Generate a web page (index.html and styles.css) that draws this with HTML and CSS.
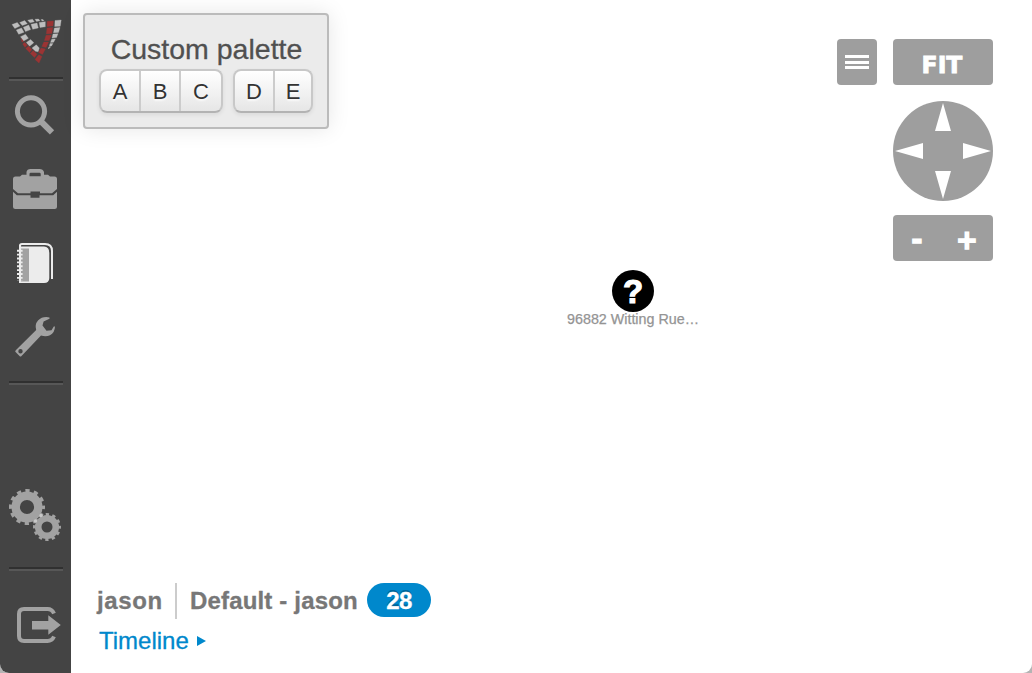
FILE: index.html
```html
<!DOCTYPE html>
<html lang="en">
<head>
<meta charset="utf-8">
<title>Workspace</title>
<link rel="stylesheet" href="styles.css">
</head>
<body>
<div class="app">
  <nav class="sidebar">
    <svg class="logo" viewBox="0 0 71 77" width="71" height="77">
      <g fill="#bdbdbd" stroke="#bdbdbd" stroke-width=".3">
        <path d="M12 24.500L17.300 22.500L20 26L14.800 28.500ZM19.700 22.500L24.700 20.600L27.300 23.700L22.300 25.500ZM27.700 20.200L32.500 19.200L34.300 21.800L30 22.800ZM35 19.300L38.500 19L40 20.800L36.500 21.400ZM41 19.500L43 19.600L44 20.700L42 20.900Z"/>
        <path d="M23.300 27.300L28.700 25L30.700 29.600L25.500 31.600ZM31 24.300L37 23L38.300 27.900L32.700 29.300ZM39.200 22.500L45.300 21.700V26.800L40 27.500ZM16.300 30L21.500 28L24 32.300L18.700 34.300ZM20.500 36.700L25.500 34.200L28.400 38.300L23.600 41ZM26.300 42.500L30.600 39.400L33.800 42.800L29.600 46.200ZM32 48L36.300 44.800L39.300 48L38.200 51.700L35.500 51.300Z"/>
        <path d="M55 20.500L61.200 20L60.300 26.200L54.700 26.500ZM54.400 28L60 27.500L58.500 32.400L53.500 32.700ZM53 34L58 33.700L56.500 37.600L52 38ZM51.700 39.200L55.300 39L53.700 42.200L50.500 42.400ZM50 43.600L53 43.400L51.500 46L49.300 46.500ZM48.500 47.500L50.500 47L48.500 49Z"/>
      </g>
      <path fill="#9b3434" stroke="#9b3434" stroke-width=".3" d="M47.300 21.300L53.400 20.900L53 26L47 26.600ZM47 28L52.700 27.500L51.900 33.500L46.300 33.900ZM46 35.300L51.300 35L49.200 40.600L44.400 40.500ZM43.800 42L48.600 42.100L46.200 47.500L41.800 46.600ZM41 48L45.400 49L42.500 54.400L38.600 52.400ZM38.800 54.800L42 56.500L39 63L35 59.500ZM33.200 50.500L37 54.200L34.500 57.600L30.300 53.500ZM28.500 46L32 49.500L29.600 52.600L25.700 48.400ZM24.500 42.300L27.300 45L25 47.400L22.700 44ZM21 38.500L23.500 41.300L22 42.300Z"/>
    </svg>
    <div class="rule"></div>
    <svg viewBox="0 81 71 69" width="71" height="69">
      <circle cx="31" cy="111.300" r="13.600" fill="none" stroke="#a2a2a2" stroke-width="5"/>
      <path d="M39.500 120L52 132.300" stroke="#a2a2a2" stroke-width="6"/>
    </svg>
    <svg viewBox="0 150 71 76" width="71" height="76">
      <path fill="#a2a2a2" fill-rule="evenodd" d="M13 179Q13 176.500 15.500 176.500H20L22 174.700H26.500V172Q27 169 30.500 169H39.500Q43 169 44 172V174.700H48L50 176.500H54.500Q57 176.500 57 179V189L52 193.200H40V191.500H30.500V193.200H18L13 189ZM29.500 176.300H40.700V174Q40.700 172.800 39.500 172.800H30.700Q29.500 172.800 29.500 174Z"/>
      <path fill="#a2a2a2" d="M13 191.700L16.800 195.300H30.500V197.700H39.500V195.300H53.200L57 191.700V206.500Q57 209 54.500 209H15.500Q13 209 13 206.500Z"/>
    </svg>
    <svg viewBox="0 226 71 74" width="71" height="74">
      <path d="M20 247V245.500Q20 244 22 244H45Q52 244 52 251V279" fill="none" stroke="#ececec" stroke-width="2"/>
      <path d="M19 246.500H44Q49.300 246.500 49.300 253V278Q49.300 283 44 283H19Z" fill="#ececec"/>
      <path d="M21 248.500H29V281.500H21Z" fill="#a2a2a2"/>
      <path d="M20 249V282" stroke="#ececec" stroke-width="2"/>
      <path d="M19.800 249.800V281" stroke="#ececec" stroke-width="5.600" stroke-dasharray="1.900 1.980"/>
    </svg>
    <svg viewBox="0 300 71 81" width="71" height="81">
      <path fill="#a2a2a2" fill-rule="evenodd" d="M15.300 351.800Q15 351 16 350L36.200 330Q34.500 324.500 38 320.500Q42.500 316 49.500 317.400V318.800L43.600 321.500L42.500 325.500L46.500 330.700L51.500 330.200L53.800 326.500H55Q54.700 333 50 335.200Q46 337 41 335.500L21.500 356Q20.500 357 19.500 356ZM20.500 349A2.200 2.200 0 1 0 20.500 353.400A2.200 2.200 0 1 0 20.500 349Z"/>
    </svg>
    <div class="rule"></div>
    <svg class="bottom-icon" viewBox="0 470 71 97" width="71" height="97">
      <g fill="none" stroke="#a2a2a2">
        <circle cx="27" cy="507" r="11.300" stroke-width="8.400"/>
        <circle cx="27" cy="507" r="16" stroke-width="4" stroke-dasharray="4.200 4.178" stroke-dashoffset="2.100"/>
        <circle cx="47" cy="527" r="8.800" stroke-width="6.600"/>
        <circle cx="47" cy="527" r="12.500" stroke-width="3" stroke-dasharray="3.300 3.245" stroke-dashoffset="1.650"/>
      </g>
      <circle cx="41" cy="515.500" r="1.700" fill="#c8c8c8"/>
      <circle cx="35.500" cy="521" r="1.700" fill="#c8c8c8"/>
    </svg>
    <div class="rule"></div>
    <svg viewBox="0 571 71 102" width="71" height="102">
      <path d="M54 613.500Q52 609 47.500 609H24Q19 609 19 614V636Q19 641 24 641H47.500Q52 641 54 636.500" fill="none" stroke="#a2a2a2" stroke-width="4"/>
      <path d="M32 621H48.300V615.300L60.800 625L48.300 634.700V629.500H32Z" fill="#a2a2a2"/>
    </svg>
  </nav>

  <main class="workspace">
    <header class="top">
      <section class="palette">
        <h1 class="palette-title">Custom palette</h1>
        <div class="palette-groups">
          <div class="group"><button>A</button><button>B</button><button>C</button></div>
          <div class="group"><button>D</button><button>E</button></div>
        </div>
      </section>
      <div class="controls">
        <button class="control menu" aria-label="Menu"><i></i><i></i><i></i></button>
        <div class="view">
          <button class="control fit">FIT</button>
          <svg class="pan" viewBox="0 0 100 100" width="100" height="100">
            <circle cx="50" cy="50" r="50" fill="#9e9e9e"/>
            <path fill="#fff" d="M50 2L58 30H42ZM50 98L42 70H58ZM2 50L30 42V58ZM98 50L70 58V42Z"/>
          </svg>
          <div class="control zoom"><span>-</span><span>+</span></div>
        </div>
      </div>
    </header>

    <div class="node">
      <div class="node-mark">?</div>
      <div class="node-label">96882 Witting Rue…</div>
    </div>

    <footer class="status">
      <div class="status-row">
        <span class="user">jason</span>
        <span class="case">Default - jason</span>
        <span class="count">28</span>
      </div>
      <a class="timeline"><span>Timeline</span><svg viewBox="0 0 9 10" width="9" height="10"><path d="M0 0L9 5L0 10Z" fill="#08c"/></svg></a>
    </footer>
  </main>
</div>
</body>
</html>
```
FILE: styles.css
```css
* { box-sizing: border-box; }
body { margin: 0; background: #b4b4b4; font-family: "Liberation Sans", Arial, sans-serif; }
button { margin: 0; padding: 0; border: 0; font-family: inherit; }
.app { display: flex; width: 1032px; height: 673px; overflow: hidden; border-radius: 0 0 9px 9px; background: #fff; }
.sidebar { display: flex; flex-direction: column; width: 71px; height: 673px; background: #444; flex: none; }
.sidebar svg { display: block; flex: none; }
.rule { flex: none; width: 54px; height: 4px; margin-left: 9px; border-top: 2px solid #303030; border-bottom: 2px solid #575757; }
.bottom-icon { margin-top: 85px; }
.workspace { position: relative; flex: 1; display: flex; flex-direction: column; justify-content: space-between; }
.top { display: flex; justify-content: space-between; align-items: flex-start; padding: 13px 39px 0 12px; }
.palette { width: 246px; height: 116px; padding: 18px 14px 0; border: 2px solid #bbb; border-radius: 4px; background: #ebebeb; box-shadow: 0 0 22px rgba(0,0,0,.1); }
.palette-title { margin: 0; height: 36px; padding-left: 1px; font-size: 28.5px; line-height: 33px; font-weight: 400; color: #505050; text-align: center; white-space: nowrap; -webkit-text-stroke: .3px #505050; }
.palette-groups { display: flex; gap: 10px; }
.group { display: flex; height: 44px; border: 2px solid #c8c8c8; border-bottom-color: #b3b3b3; border-radius: 8px; overflow: hidden; background: linear-gradient(#fff, #e6e6e6); box-shadow: 0 2px 4px rgba(0,0,0,.07); }
.group button { width: 40px; padding-top: 1px; background: none; font-size: 22px; color: #333; text-shadow: 0 2px 2px rgba(255,255,255,.75); }
.group button:first-child { width: 38px; }
.group button + button { border-left: 2px solid #ccc; }
.group button:nth-child(3) { width: 42px; }
.group:last-child button:last-child { width: 38px; }
.controls { display: flex; gap: 16px; padding-top: 26px; align-items: flex-start; }
.control { height: 46px; border-radius: 4px; background: #9e9e9e; color: #fff; }
.menu { width: 40px; padding: 16px 8px; display: flex; flex-direction: column; gap: 2.500px; }
.menu i { flex: none; width: 24px; height: 3px; background: #fff; }
.view { display: flex; flex-direction: column; width: 100px; }
.view svg { display: block; }
.fit { padding: 5px 2px 0 0; font: 700 23.500px "DejaVu Sans", sans-serif; -webkit-text-stroke: .8px #fff; }
.pan { margin: 16px 0 14px; }
.zoom { display: flex; font: 700 26px/51px "DejaVu Sans", sans-serif; -webkit-text-stroke: 1.600px #fff; }
.zoom span { width: 48px; text-align: center; }
.zoom span + span { width: 52px; }
.node { position: absolute; left: 482px; top: 270px; width: 160px; display: flex; flex-direction: column; align-items: center; }
.node-mark { width: 42px; height: 42px; border-radius: 50%; background: #000; color: #fff; text-align: center; font-size: 33px; line-height: 44px; font-weight: 700; -webkit-text-stroke: 1.200px #fff; }
.node-label { font-size: 14.300px; line-height: 14px; color: #949494; white-space: nowrap; -webkit-text-stroke: .25px #949494; }
.status { padding: 0 26px 16px; }
.status-row { display: flex; align-items: center; height: 36px; font-size: 24px; font-weight: 700; color: #777; -webkit-text-stroke: .3px; }
.user { width: 80px; height: 36px; line-height: 35px; letter-spacing: .6px; border-right: 2px solid #ccc; }
.case { width: 190px; padding-left: 13px; white-space: nowrap; letter-spacing: .17px; }
.count { width: 64px; height: 34px; margin-bottom: 2px; border-radius: 17px; background: #08c; color: #fff; text-align: center; line-height: 35px; letter-spacing: -.5px; text-shadow: 0 -2px 0 rgba(0,0,0,.25); }
.timeline { display: flex; align-items: center; gap: 8px; height: 38px; padding: 5px 0 0 2px; color: #08c; font-size: 24px; -webkit-text-stroke: .3px #08c; }
```
